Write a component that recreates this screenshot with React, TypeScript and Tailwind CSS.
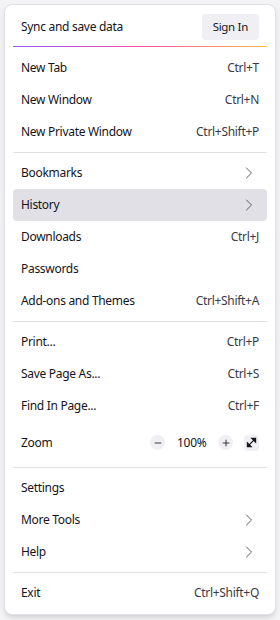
import { ChevronRight, Minus, Plus } from "lucide-react";

type Item = {
  label: string;
  shortcut?: string;
  submenu?: boolean;
  active?: boolean;
};

const groups: Item[][] = [
  [
    { label: "New Tab", shortcut: "Ctrl+T" },
    { label: "New Window", shortcut: "Ctrl+N" },
    { label: "New Private Window", shortcut: "Ctrl+Shift+P" },
  ],
  [
    { label: "Bookmarks", submenu: true },
    { label: "History", submenu: true, active: true },
    { label: "Downloads", shortcut: "Ctrl+J" },
    { label: "Passwords" },
    { label: "Add-ons and Themes", shortcut: "Ctrl+Shift+A" },
  ],
  [
    { label: "Print...", shortcut: "Ctrl+P" },
    { label: "Save Page As...", shortcut: "Ctrl+S" },
    { label: "Find In Page...", shortcut: "Ctrl+F" },
  ],
  [
    { label: "Settings" },
    { label: "More Tools", submenu: true },
    { label: "Help", submenu: true },
  ],
];

function Row({ item }: { item: Item }) {
  return (
    <div
      className={`flex h-8 items-center justify-between rounded px-2 ${
        item.active ? "bg-[#e0e0e6]" : ""
      }`}
    >
      <span>{item.label}</span>
      {item.shortcut && <span className="text-[#3b3a44]">{item.shortcut}</span>}
      {item.submenu && (
        <ChevronRight className="h-5 w-5 text-[#5b5b66]" strokeWidth={1.2} />
      )}
    </div>
  );
}

function Separator() {
  return (
    <div className="py-1">
      <div className="h-px bg-[#e0e0e6]" />
    </div>
  );
}

function ZoomRow() {
  return (
    <div className="flex h-[41px] items-center justify-between px-2">
      <span>Zoom</span>
      <div className="flex items-center">
        <button className="flex h-[15px] w-[15px] items-center justify-center rounded-full bg-[#f0f0f4]">
          <Minus className="h-[10px] w-[10px]" strokeWidth={2} />
        </button>
        <span className="ml-[12px] w-[29px] text-center">100%</span>
        <button className="ml-[12px] flex h-[15px] w-[15px] items-center justify-center rounded-full bg-[#f0f0f4]">
          <Plus className="h-[10px] w-[10px]" strokeWidth={2} />
        </button>
        <button className="ml-[11px] flex h-4 w-[15px] items-center justify-center rounded-sm bg-[#f0f0f4]">
          <svg viewBox="0 0 16 16" className="h-[13px] w-[13px]" fill="none" stroke="#15141a" strokeWidth={1.5}>
            <path d="M3.5 12.5 L12.5 3.5" />
            <path d="M8.5 3 H13 V7.5 Z" fill="#15141a" />
            <path d="M3 8.5 V13 H7.5 Z" fill="#15141a" />
          </svg>
        </button>
      </div>
    </div>
  );
}

export default function App() {
  return (
    <div className="min-h-[620px] bg-[#f3f3f5] p-1 font-['Noto_Sans',sans-serif] text-[12px] tracking-[-0.3px] text-[#15141a]">
      <div className="w-[272px] rounded-lg border border-[#e0e0e6] bg-white px-2 pb-[5px] pt-2 shadow-md">
        {/* account header */}
        <div className="flex h-[28px] items-center justify-between pl-2 pr-2">
          <span>Sync and save data</span>
          <button className="h-[26px] rounded bg-[#f0f0f4] px-[11px] text-[11.5px]">Sign In</button>
        </div>
        <div className="pb-[5px] pt-[5px]">
          <div className="h-px bg-[linear-gradient(90deg,#9059ff,#ff4aa2,#ffbd4f)]" />
        </div>

        {groups.slice(0, 2).map((g, i) => (
          <div key={i}>
            {g.map((it) => (
              <Row key={it.label} item={it} />
            ))}
            <Separator />
          </div>
        ))}

        {groups[2].map((it) => (
          <Row key={it.label} item={it} />
        ))}
        <ZoomRow />
        <Separator />

        {groups[3].map((it) => (
          <Row key={it.label} item={it} />
        ))}
        <Separator />
        <Row item={{ label: "Exit", shortcut: "Ctrl+Shift+Q" }} />
      </div>
    </div>
  );
}
